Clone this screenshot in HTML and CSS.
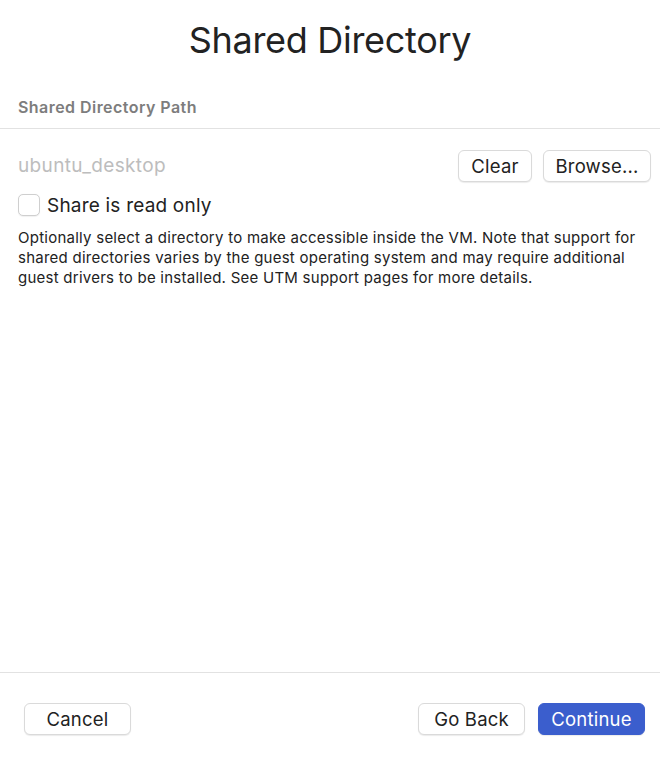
FILE: index.html
```html
<!DOCTYPE html>
<html>
<head>
<meta charset="utf-8">
<link rel="stylesheet" href="styles.css">
</head>
<body>
<div class="window">
  <h1 class="title">Shared Directory</h1>
  <div class="section-header">Shared Directory Path</div>
  <div class="content">
    <div class="path-row">
      <span class="path">ubuntu_desktop</span>
      <div class="path-buttons">
        <button class="btn btn-clear">Clear</button>
        <button class="btn btn-browse">Browse...</button>
      </div>
    </div>
    <label class="check-row">
      <span class="checkbox"></span>
      <span class="check-label">Share is read only</span>
    </label>
    <p class="note">Optionally select a directory to make accessible inside the VM. Note that support for<br>shared directories varies by the guest operating system and may require additional<br>guest drivers to be installed. See UTM support pages for more details.</p>
  </div>
  <div class="footer">
    <button class="btn btn-footer">Cancel</button>
    <div class="footer-right">
      <button class="btn btn-footer">Go Back</button>
      <button class="btn btn-footer btn-primary">Continue</button>
    </div>
  </div>
</div>
</body>
</html>
```

FILE: styles.css
```css
html, body {
  margin: 0;
  padding: 0;
  background: #ffffff;
}

body {
  font-family: "Inter", "Liberation Sans", sans-serif;
  color: #222222;
}

.window {
  display: flex;
  flex-direction: column;
  height: 757px;
}

.title {
  margin: 0;
  padding-top: 17px;
  height: 49px;
  font-size: 36px;
  line-height: 46px;
  font-weight: 400;
  text-align: center;
  color: #222222;
  letter-spacing: -0.3px;
}

.section-header {
  margin-top: 30px;
  padding: 0 18px;
  height: 32px;
  font-size: 16px;
  line-height: 22px;
  font-weight: 600;
  color: #7d7d7d;
  letter-spacing: 0.45px;
  border-bottom: 1px solid #e2e2e2;
}

.content {
  flex: 1;
  padding: 20px 9px 0 18px;
}

.path-row {
  display: flex;
  align-items: center;
  justify-content: space-between;
  height: 33px;
}

.path {
  font-size: 19px;
  color: #bdbdbd;
  letter-spacing: 0.35px;
}

.path-buttons {
  display: flex;
  gap: 11px;
}

.btn {
  font-family: "Inter", "Liberation Sans", sans-serif;
  font-size: 18.5px;
  letter-spacing: 0.2px;
  color: #222222;
  background: #ffffff;
  border: 1px solid #dadada;
  border-radius: 6px;
  box-shadow: 0 1px 1px rgba(0, 0, 0, 0.08);
  height: 32px;
  padding: 0;
  cursor: default;
}

.btn-clear {
  width: 74px;
}

.btn-browse {
  width: 108px;
}

.check-row {
  display: flex;
  align-items: center;
  gap: 7px;
  margin-top: 12px;
  height: 22px;
}

.checkbox {
  width: 20px;
  height: 20px;
  border: 1px solid #cfcfcf;
  border-radius: 5px;
  background: #ffffff;
  box-shadow: 0 0.5px 1px rgba(0, 0, 0, 0.06);
}

.check-label {
  font-size: 19px;
  letter-spacing: 0.2px;
  color: #222222;
}

.note {
  margin: 12px 0 0 0;
  font-size: 15px;
  line-height: 20px;
  color: #222222;
  letter-spacing: 0.25px;
}

.footer {
  display: flex;
  justify-content: space-between;
  align-items: flex-start;
  height: 85px;
  padding: 30px 15px 0 24px;
  box-sizing: border-box;
  border-top: 1px solid #e2e2e2;
}

.footer-right {
  display: flex;
  gap: 13px;
}

.btn-footer {
  width: 107px;
  height: 32px;
}

.btn-primary {
  background: #3b5ecd;
  border-color: #3b5ecd;
  color: #ffffff;
}
```
